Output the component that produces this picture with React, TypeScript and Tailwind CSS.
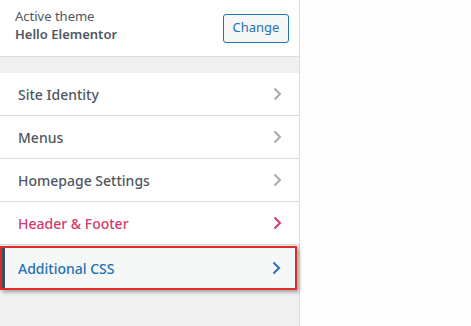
import React from "react";

const Chevron = ({ color }: { color: string }) => (
  <svg width="9" height="14" viewBox="0 0 9 14" fill="none">
    <polyline points="1.5,1.5 7,7 1.5,12.5" stroke={color} strokeWidth="2" fill="none" />
  </svg>
);

const Row = ({ label, color, chev }: { label: string; color: string; chev: string }) => (
  <div className="h-[43px] border-b border-[#dcdcde] bg-white flex items-center justify-between pl-[18px] pr-[17px]">
    <span className="text-[14px] font-medium" style={{ color }}>{label}</span>
    <Chevron color={chev} />
  </div>
);

export default function App() {
  return (
    <div
      className="w-[471px] h-[326px] flex bg-white overflow-hidden"
      style={{ fontFamily: '"Noto Sans", "Open Sans", sans-serif' }}
    >
      <div className="w-[300px] h-full border-r border-[#dcdcde] bg-[#f0f0f1] flex flex-col shrink-0">
        <div className="h-[57px] bg-white border-b border-[#dcdcde] pl-[15px] pr-[10px] flex items-start justify-between">
          <div className="flex flex-col leading-[18px] pt-[7px]">
            <span className="text-[13px] text-[#50575e]">Active theme</span>
            <span className="text-[13px] font-semibold text-[#50575e]">Hello Elementor</span>
          </div>
          <button className="self-center w-[66px] h-[29px] border border-[#2271b1] rounded-[3px] bg-[#f6f7f7] text-[#2271b1] text-[13px] flex items-center justify-center">
            Change
          </button>
        </div>
        <div className="h-[16px]" />
        <Row label="Site Identity" color="#50575e" chev="#a7aaad" />
        <Row label="Menus" color="#50575e" chev="#a7aaad" />
        <Row label="Homepage Settings" color="#50575e" chev="#a7aaad" />
        <Row label="Header & Footer" color="#d43a6c" chev="#d43a6c" />
        <div className="w-[297px] h-[44px] mt-[1px] border-2 border-[#e02b2b] bg-[#f6f7f7] shadow-[2px_2px_4px_rgba(0,0,0,0.35)] flex items-center justify-between pr-[14px] relative">
          <div className="absolute left-0 top-0 bottom-0 w-[3px] bg-[#3a4f66]" />
          <span className="text-[14px] font-medium text-[#2271b1] pl-[16px]">Additional CSS</span>
          <Chevron color="#2271b1" />
        </div>
      </div>
      <div className="flex-1 bg-[#fefefe]" />
    </div>
  );
}
